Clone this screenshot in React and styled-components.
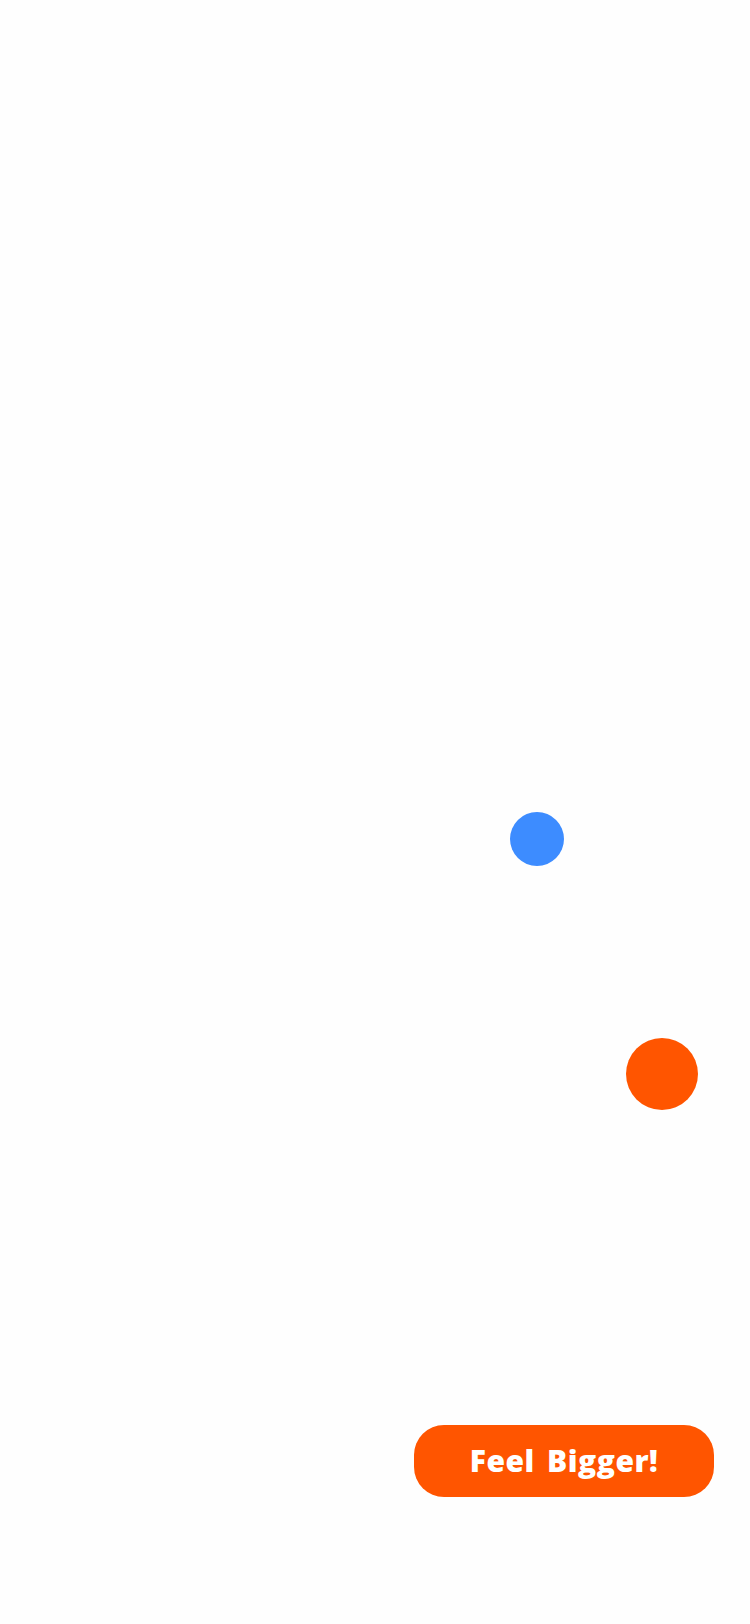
import React from "react";
import styled, { createGlobalStyle } from "styled-components";

const Global = createGlobalStyle`
  html, body { margin: 0; padding: 0; background: #fefefe; }
  body { font-family: "Open Sans", Lato, sans-serif; }
`;

const Stage = styled.div`
  position: relative;
  width: 750px;
  height: 1624px;
  background: #fefefe;
  display: flex;
  flex-direction: column;
  justify-content: flex-end;
  align-items: flex-end;
  padding: 0 36px 127px 0;
  box-sizing: border-box;
  overflow: hidden;
`;

const Ball = styled.div`
  position: absolute;
  left: ${(p) => p.$x - p.$size / 2}px;
  top: ${(p) => p.$y - p.$size / 2}px;
  width: ${(p) => p.$size}px;
  height: ${(p) => p.$size}px;
  border-radius: 50%;
  background: ${(p) => p.$color};
`;

const BigButton = styled.button`
  width: 300px;
  height: 72px;
  border: none;
  border-radius: 30px;
  background: #ff5500;
  color: #ffffff;
  font-family: "Open Sans", Lato, sans-serif;
  font-weight: 800;
  font-size: 30px;
  letter-spacing: 0.5px;
  word-spacing: 4px;
  display: flex;
  align-items: center;
  justify-content: center;
  padding: 0 0 2px 0;
  cursor: pointer;
`;

export default function App() {
  return (
    <>
      <Global />
      <Stage>
        <Ball $x={537} $y={839} $size={54} $color="#3d8cff" />
        <Ball $x={662} $y={1074} $size={72} $color="#ff5500" />
        <BigButton>Feel Bigger!</BigButton>
      </Stage>
    </>
  );
}
